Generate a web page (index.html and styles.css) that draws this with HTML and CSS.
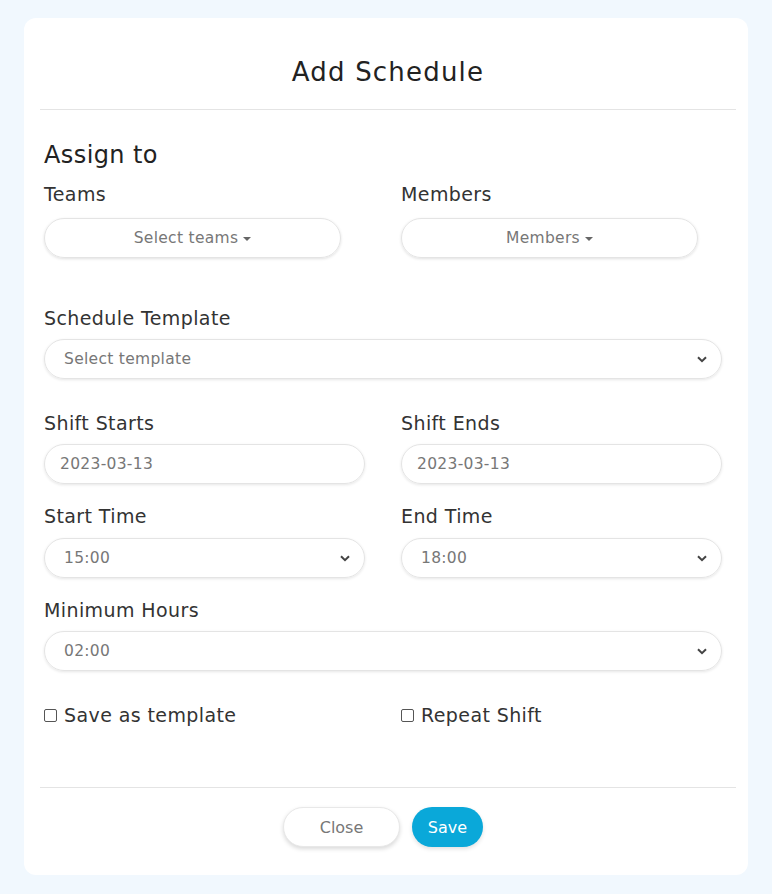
FILE: index.html
```html
<!DOCTYPE html>
<html lang="en">
<head>
<meta charset="utf-8">
<title>Add Schedule</title>
<link rel="stylesheet" href="styles.css">
</head>
<body>
<div class="modal">
  <div class="modal-header">
    <h2 class="modal-title">Add Schedule</h2>
  </div>
  <div class="modal-body">
    <h3 class="section-title">Assign to</h3>
    <div class="row row-first">
      <div class="col">
        <div class="label">Teams</div>
        <div class="dropdown-btn">Select teams <span class="caret"></span></div>
      </div>
      <div class="col">
        <div class="label">Members</div>
        <div class="dropdown-btn">Members <span class="caret"></span></div>
      </div>
    </div>
    <div class="group group-template">
      <div class="label">Schedule Template</div>
      <div class="field select"><span>Select template</span>
        <svg class="chev" width="10" height="7" viewBox="0 0 10 7"><path d="M1 1.2 L5 5.2 L9 1.2" fill="none" stroke="#444" stroke-width="2"/></svg>
      </div>
    </div>
    <div class="row row-shift">
      <div class="col">
        <div class="label">Shift Starts</div>
        <div class="field date"><span>2023-03-13</span></div>
      </div>
      <div class="col">
        <div class="label">Shift Ends</div>
        <div class="field date"><span>2023-03-13</span></div>
      </div>
    </div>
    <div class="row row-time">
      <div class="col">
        <div class="label">Start Time</div>
        <div class="field select"><span>15:00</span>
          <svg class="chev" width="10" height="7" viewBox="0 0 10 7"><path d="M1 1.2 L5 5.2 L9 1.2" fill="none" stroke="#444" stroke-width="2"/></svg>
        </div>
      </div>
      <div class="col">
        <div class="label">End Time</div>
        <div class="field select"><span>18:00</span>
          <svg class="chev" width="10" height="7" viewBox="0 0 10 7"><path d="M1 1.2 L5 5.2 L9 1.2" fill="none" stroke="#444" stroke-width="2"/></svg>
        </div>
      </div>
    </div>
    <div class="group group-min">
      <div class="label">Minimum Hours</div>
      <div class="field select"><span>02:00</span>
        <svg class="chev" width="10" height="7" viewBox="0 0 10 7"><path d="M1 1.2 L5 5.2 L9 1.2" fill="none" stroke="#444" stroke-width="2"/></svg>
      </div>
    </div>
    <div class="row row-check">
      <div class="col">
        <label class="check"><span class="box"></span>Save as template</label>
      </div>
      <div class="col">
        <label class="check"><span class="box"></span>Repeat Shift</label>
      </div>
    </div>
  </div>
  <div class="modal-footer">
    <button class="btn btn-close">Close</button>
    <button class="btn btn-save">Save</button>
  </div>
</div>
</body>
</html>
```

FILE: styles.css
```css
* { box-sizing: border-box; }
html, body { margin: 0; padding: 0; }
body {
  background: #f1f8fe;
  font-family: "DejaVu Sans", "Open Sans", sans-serif;
  color: #333;
  padding: 18px 24px 19px 24px;
}
.modal {
  background: #fff;
  border-radius: 12px;
  height: 857px;
  display: flex;
  flex-direction: column;
  padding: 0 12px 0 16px;
}
.modal-header {
  border-bottom: 1px solid #e4e4e4;
  padding: 38px 0 21px;
  text-align: center;
}
.modal-title {
  margin: 0;
  font-size: 26px;
  line-height: 32px;
  font-weight: 400;
  color: #222;
  letter-spacing: 1.2px;
}
.modal-body {
  padding: 31px 14px 0 4px;
  flex: 1;
}
.section-title {
  margin: 0 0 12px;
  font-size: 24px;
  line-height: 29px;
  font-weight: 400;
  color: #222;
  letter-spacing: 0.4px;
}
.row {
  display: grid;
  grid-template-columns: 321px 321px;
  column-gap: 36px;
}
.label {
  font-size: 19px;
  line-height: 24px;
  color: #333;
  margin-bottom: 9px;
  letter-spacing: 0.4px;
}
.row-first .label { margin-bottom: 12px; }
.row-first { margin-bottom: 48px; }
.dropdown-btn {
  width: 297px;
  height: 40px;
  border: 1px solid #e4e4e4;
  border-radius: 20px;
  box-shadow: 0 1px 3px rgba(0,0,0,0.12);
  display: flex;
  align-items: center;
  justify-content: center;
  font-size: 15.5px;
  color: #777;
  gap: 5px;
  letter-spacing: 0.3px;
}
.caret {
  width: 0;
  height: 0;
  border-left: 4px solid transparent;
  border-right: 4px solid transparent;
  border-top: 4px solid #666;
  margin-top: 2px;
}
.field {
  height: 40px;
  border: 1px solid #e4e4e4;
  border-radius: 20px;
  box-shadow: 0 1px 3px rgba(0,0,0,0.1);
  display: flex;
  align-items: center;
  font-size: 15.5px;
  color: #777;
  letter-spacing: 0.3px;
}
.field.select { padding: 0 14px 0 19px; justify-content: space-between; }
.field.date { padding: 0 15px; }
.group-template { margin-bottom: 32px; }
.row-shift { margin-bottom: 20px; }
.row-time .label { margin-bottom: 10px; }
.row-time { margin-bottom: 20px; }
.group-min { margin-bottom: 32px; }
.check {
  display: flex;
  align-items: center;
  font-size: 19px;
  line-height: 24px;
  color: #333;
  letter-spacing: 0.4px;
}
.box {
  width: 13px;
  height: 13px;
  border: 1px solid #555;
  border-radius: 2px;
  margin-right: 7px;
}
.modal-footer {
  border-top: 1px solid #e4e4e4;
  padding: 19px 10px 28px 0;
  display: flex;
  justify-content: center;
  gap: 12px;
}
.btn {
  height: 40px;
  border-radius: 20px;
  font-family: inherit;
  font-size: 16px;
  border: none;
  cursor: pointer;
}
.btn-close {
  width: 117px;
  background: #fff;
  color: #777;
  border: 1px solid #e8e8e8;
  box-shadow: 0 2px 4px rgba(0,0,0,0.15);
}
.btn-save {
  width: 71px;
  background: #0aa8d9;
  color: #fff;
  font-weight: 400;
  box-shadow: 0 2px 4px rgba(0,0,0,0.12);
}
```
